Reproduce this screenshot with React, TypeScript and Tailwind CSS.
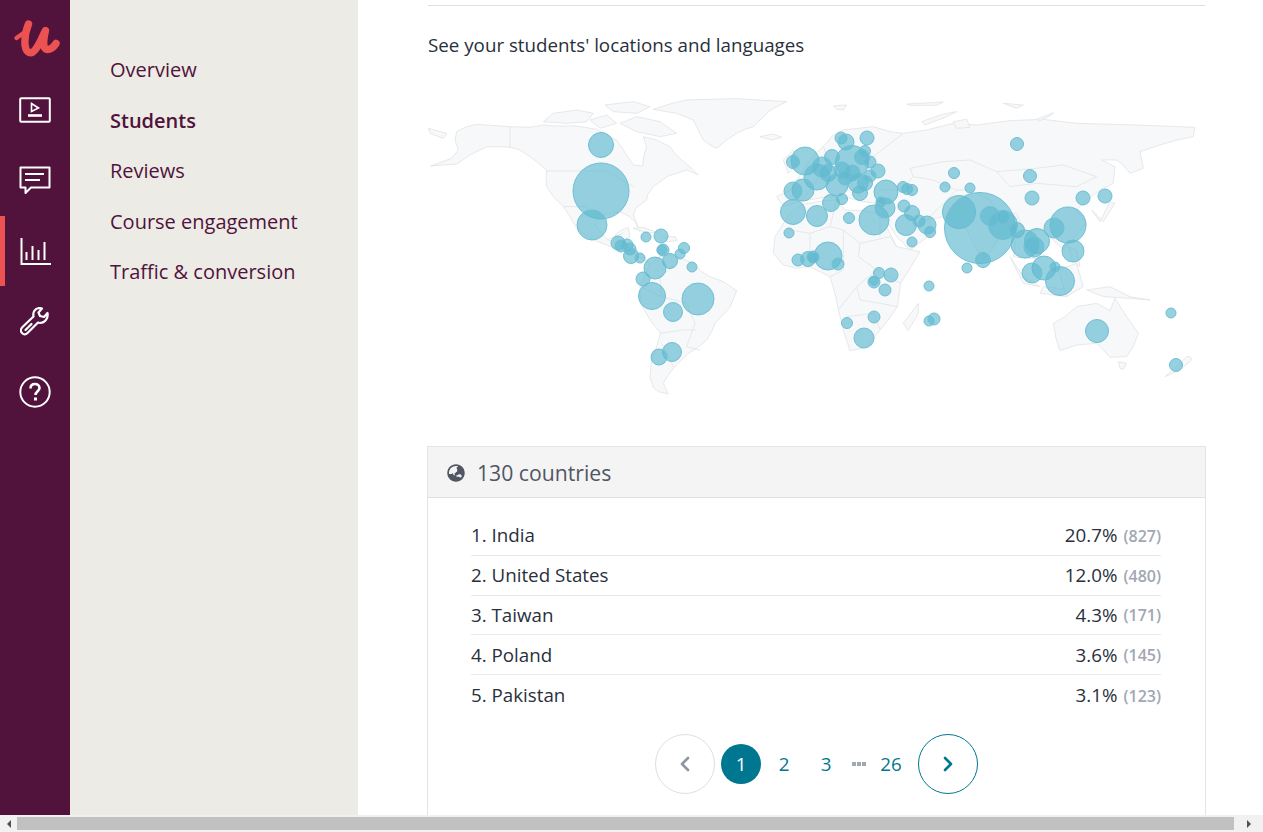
import { ChevronLeft, ChevronRight } from "lucide-react";
import { FaGlobeAsia } from "react-icons/fa";

const navItems = ["Overview", "Students", "Reviews", "Course engagement", "Traffic & conversion"];

const countries = [
  { name: "1. India", pct: "20.7%", count: "(827)" },
  { name: "2. United States", pct: "12.0%", count: "(480)" },
  { name: "3. Taiwan", pct: "4.3%", count: "(171)" },
  { name: "4. Poland", pct: "3.6%", count: "(145)" },
  { name: "5. Pakistan", pct: "3.1%", count: "(123)" },
];

// [x, y, r] in page coordinates
const bubbles = [
  [601, 191, 28], [601, 145, 12.5], [592, 225, 15], [618, 243, 7], [621, 246, 6], [627, 245, 6], [630, 249, 6],
  [631, 256, 7.5], [640, 258, 5], [646, 237, 5], [661, 236, 7], [663, 250, 6], [662, 250, 5], [684, 248, 5.5],
  [680, 254, 5], [670, 261, 7.5], [655, 268, 11], [643, 279, 7], [652, 296, 13.5], [673, 312, 9.5], [698, 299, 16],
  [692, 267, 5], [672, 352, 9.5], [659, 357, 8],
  [805, 161, 14], [793, 162, 6.5], [817, 177, 13], [803, 190, 11], [793, 191, 9], [793, 212, 12.5], [817, 216, 10.5],
  [789, 233, 5], [798, 260, 6], [808, 259, 7.5], [813, 258, 5],
  [841, 138, 6], [846, 142, 8], [867, 138, 7], [852, 162, 16.5], [865, 151, 5.5], [862, 157, 7.5], [870, 162, 6],
  [878, 171, 7], [832, 157, 7.5], [822, 167, 10], [828, 173, 8.5], [837, 185, 11], [842, 170, 8], [852, 173, 8],
  [845, 178, 7], [858, 183, 10], [865, 183, 7.5], [870, 176, 6], [860, 193, 7.5], [886, 192, 12], [903, 187, 5.5],
  [907, 189, 5.5], [912, 190, 5.5], [831, 203, 8.5], [842, 199, 5.5], [849, 218, 5.5], [874, 220, 15], [885, 208, 10],
  [881, 202, 5], [904, 206, 6], [912, 213, 7.5], [906, 225, 10.5], [919, 221, 6], [927, 225, 9], [930, 232, 5.5],
  [912, 242, 5], [959, 212, 16.5], [980, 228, 35.5], [990, 216, 9.5], [1003, 225, 14.5], [1003, 217, 6.5],
  [1017, 230, 7.5], [983, 260, 7.5], [967, 268, 5], [954, 173, 5.5], [945, 187, 5], [970, 188, 5], [1017, 144, 6.5],
  [1030, 176, 6.5], [1032, 198, 7], [1083, 198, 7], [1105, 196, 7], [1068, 225, 18], [1054, 228, 10],
  [1037, 241, 12.5], [1025, 244, 14], [1034, 247, 10], [1073, 251, 11], [1044, 268, 12], [1032, 273, 10],
  [1060, 281, 14.5], [1055, 267, 5], [828, 256, 14], [838, 264, 6], [813, 257, 6], [879, 273, 5.5], [891, 275, 7],
  [874, 282, 6], [874, 281, 4.5], [885, 290, 6], [929, 286, 5], [874, 317, 6], [847, 323, 5.5], [864, 338, 10],
  [929, 321, 5], [934, 319, 6], [1097, 331, 11.5], [1171, 313, 5], [1176, 365, 6.5],
];

// outlines below are traced at 3x, left half relative to (420,90), right half to (810,90)
const westLand = [
  "M110 125L140 110L170 103L270 110L330 112L370 105L400 108L470 108L530 118L560 135L590 150L620 195L640 225L668 228L672 195L680 170L670 140L710 150L750 170L765 190L790 215L815 235L835 255L800 240L770 250L745 258L720 275L700 290L682 315L680 330L650 352L640 375L660 425L645 395L625 378L600 365L570 370L545 380L525 405L545 430L565 450L590 457L585 435L605 420L625 412L630 440L610 460L650 480L690 522L720 500L750 490L785 505L820 520L845 545L870 560L910 575L950 602L930 652L885 700L875 725L860 750L830 775L805 790L785 810L765 830L745 855L730 880L745 912L715 905L700 892L690 860L695 810L710 770L722 730L690 690L662 640L660 590L690 522L640 490L600 480L560 465L520 450L490 430L470 415L450 380L430 350L400 320L380 290L378 262L380 240L350 215L330 200L300 180L270 172L235 170L200 170L150 195L110 222L70 225L32 228L60 218L95 205L115 180L105 150Z",
  "M700 58L750 42L800 30L950 26L1100 35L1060 55L1040 70L1020 90L1000 110L975 118L950 130L920 150L890 175L870 165L850 150L835 120L820 90L770 70Z",
  "M370 95L400 70L470 60L520 70L500 95L440 100Z",
  "M555 45L640 35L690 50L650 70L580 65Z",
  "M600 100L650 80L720 95L770 130L720 140L650 125Z",
  "M510 90L560 75L590 100L540 115Z",
  "M1020 140L1060 132L1085 142L1055 150Z",
  "M640 415L670 412L712 428L680 428Z",
  "M735 440L765 440L772 452L740 455Z",
  "M25 115L80 130L70 145L30 130Z",
];

const westBorders = [
  "M270 110L270 172", "M380 243L560 243L640 290", "M430 350L500 350L540 385", "M560 450L610 430",
  "M725 620L800 640L825 700L800 770", "M660 590L725 620L720 560L760 530", "M720 730L790 720L830 720",
  "M760 830L725 760", "M800 770L840 780",
];

const eastLand = [
  "M-60 300L-20 240L10 195L40 170L70 135L100 120L190 110L240 125L280 130L350 120L430 100L500 105L600 92L700 88L800 100L980 105L1155 112L1150 140L1100 150L1050 165L1020 175L990 185L1000 235L960 250L940 225L920 210L875 210L915 230L910 280L870 300L830 330L800 360L830 400L795 440L760 480L730 450L700 420L660 420L675 460L690 505L640 505L610 500L620 430L570 440L545 480L520 510L495 470L470 420L435 395L400 380L350 390L378 420L340 450L300 480L260 440L235 400L215 360L200 340L160 335L120 325L50 320L-30 335L-80 350L-100 320Z",
  "M-105 440L-60 370L-30 345L25 335L80 328L105 360L160 362L210 372L235 420L260 470L330 485L300 535L272 580L262 650L235 690L210 720L170 772L120 782L100 720L85 660L75 610L60 560L0 530L-40 535L-80 525L-110 490Z",
  "M325 640L325 670L295 722L280 700Z",
  "M730 700L765 680L800 650L860 640L900 662L915 625L950 680L985 730L970 770L950 800L900 802L880 780L860 760L800 765L750 782L738 745Z",
  "M925 815L950 820L940 838L930 835Z",
  "M1065 860L1100 830L1130 800L1140 800L1145 810L1110 840Z",
  "M870 395L900 335L915 340L880 395L845 360Z",
  "M600 500L640 560L690 590L640 580Z",
  "M700 590L790 600L770 620L690 610Z",
  "M745 540L800 520L820 590L770 620Z",
  "M830 600L900 590L960 620L1020 630L960 625L880 620Z",
  "M775 470L800 480L810 530L785 510Z",
  "M335 95L400 72L440 65L410 80L345 105Z",
  "M430 95L470 88L480 112L440 115Z",
  "M580 40L640 45L620 55Z",
  "M680 88L730 68L725 75L690 92Z",
  "M70 48L110 45L100 60L80 58Z",
  "M290 42L400 36L380 46L300 46Z",
  "M-80 210L-50 180L-35 220L-65 250Z",
];

const eastBorders = [
  "M300 235L400 215L480 210L560 245L680 235L760 225L860 260L800 290L680 280L600 290L560 245",
  "M310 260L370 270L440 300L480 300L540 330L560 370L620 370L640 420",
  "M300 235L310 260L270 300L215 300", "M440 300L400 340L350 390",
  "M60 410L100 420L150 460L240 440L260 470", "M150 460L145 500L200 540L272 580",
  "M100 420L100 540L60 560", "M0 430L60 410L80 328", "M-60 420L0 430L0 530", "M200 540L140 590L85 660",
  "M140 590L150 630L210 640L262 650", "M110 680L190 670L210 720", "M210 372L210 440",
  "M-30 335L30 260L100 245L150 320", "M100 245L190 200L280 130", "M40 170L70 240",
];

function WorldMap() {
  return (
    <svg viewBox="428 90 778 320" className="block w-[778px] h-[320px]">
      <g transform="translate(420 90) scale(0.3333)" fill="#f7f8fa" stroke="#e4e4e6" strokeWidth="2.6" strokeLinejoin="round">
        {westLand.map((d) => <path key={d} d={d} />)}
        {westBorders.map((d) => <path key={d} d={d} fill="none" />)}
      </g>
      <g transform="translate(810 90) scale(0.3333)" fill="#f7f8fa" stroke="#e4e4e6" strokeWidth="2.6" strokeLinejoin="round">
        {eastLand.map((d) => <path key={d} d={d} />)}
        {eastBorders.map((d) => <path key={d} d={d} fill="none" />)}
      </g>
      {bubbles.map(([x, y, r]) => (
        <circle key={`${x}-${y}-${r}`} cx={x} cy={y} r={r} fill="#5fb9d0" fillOpacity="0.66" stroke="#6fc0d4" strokeWidth="1" />
      ))}
    </svg>
  );
}

function Sidebar() {
  return (
    <div className="w-[70px] shrink-0 bg-[#51123b] text-white">
      <div className="h-[74px] flex items-start">
        <svg width="48" height="44" viewBox="0 0 48 44" className="ml-[13px] mt-[17px]" fill="none" stroke="#ec5252" strokeLinecap="round" strokeLinejoin="round">
          <path d="M15.5 7C13 13 11.5 20 12 28C13 36 18 38 22 33C27 27 29 20 32.5 13.5C31 20 30 27 31.5 30.5C33.5 34 39 33 43 26.5" strokeWidth="7.4" />
          <path d="M3.5 21L12 15" strokeWidth="4.4" />
        </svg>
      </div>
      <div className="h-[71px] flex items-center justify-center">
        <svg width="32" height="26" viewBox="0 0 32 26" fill="none" stroke="white">
          <rect x="1.2" y="1.2" width="29.6" height="23.6" rx="1" strokeWidth="2" />
          <path d="M12.5 6.5L19.5 11L12.5 14.5Z" strokeWidth="1.6" />
          <path d="M9 18.5H23" strokeWidth="2.6" />
        </svg>
      </div>
      <div className="h-[71px] flex items-center justify-center">
        <svg width="32" height="29" viewBox="0 0 32 29" fill="none" stroke="white" strokeWidth="2">
          <path d="M1.5 1.5H30.5V21.5H12L6.5 27V21.5H1.5Z" strokeLinejoin="round" />
          <path d="M6 8H25M6 14H21" />
        </svg>
      </div>
      <div className="h-[70px] flex items-center justify-center border-l-[5px] border-[#ec5252] pr-[5px]">
        <svg width="31" height="27" viewBox="0 0 31 27" fill="none" stroke="white" strokeWidth="2">
          <path d="M1.5 0V26H31" />
          <path d="M6.5 14V22M12.5 8V22M18.5 12V22M24.5 4V22" />
        </svg>
      </div>
      <div className="h-[71px] flex items-center justify-center">
        <svg width="30" height="30" viewBox="10 10 30 30" fill="none" stroke="white" strokeWidth="2.2" strokeLinejoin="round">
          <path d="M12.5 30L23.5 19.5C22.5 15 25 11 30 11L32 11.5L28.5 15.5L30 19L34 20L37.5 16C38.5 21 35 26 30 26L28 25.5L17.5 36C15.5 38 13 37.5 12 36C10.5 34.5 10.5 32 12.5 30Z" />
          <path d="M15.5 33L21.5 27" strokeLinecap="round" />
        </svg>
      </div>
      <div className="h-[70px] flex items-center justify-center">
        <svg width="32" height="32" viewBox="0 0 32 32" fill="none" stroke="white">
          <circle cx="16" cy="16" r="14.7" strokeWidth="2" />
          <path d="M11.5 12.5C11.5 9.5 13.5 8 16 8C18.7 8 20.5 9.7 20.5 12C20.5 15 16.5 15.5 16.5 19" strokeWidth="2.6" />
          <path d="M16.5 21.5V24.5" strokeWidth="3" />
        </svg>
      </div>
    </div>
  );
}

function ScrollBar() {
  return (
    <div className="h-[17px] shrink-0 bg-[#f1f1f1] flex items-center">
      <div className="w-[17px] flex justify-center">
        <div className="w-0 h-0 border-y-[4px] border-y-transparent border-r-[4px] border-r-[#505050]" />
      </div>
      <div className="flex-1 h-[13px] bg-[#c1c1c1]" />
      <div className="w-[29px] flex justify-center">
        <div className="w-0 h-0 border-y-[4px] border-y-transparent border-l-[4px] border-l-[#505050]" />
      </div>
    </div>
  );
}

export default function App() {
  return (
    <div className="h-[832px] w-[1263px] flex flex-col overflow-hidden bg-white font-['Open_Sans',sans-serif]">
      <div className="flex-1 flex min-h-0">
        <Sidebar />
        <div className="w-[288px] shrink-0 bg-[#ecebe6] pt-[45px] pl-[40px] text-[#51123b]">
          {navItems.map((item) => (
            <div key={item} className={`h-[50.5px] flex items-center text-[20px] ${item === "Students" ? "font-semibold" : ""}`}>
              {item}
            </div>
          ))}
        </div>
        <div className="flex-1 min-w-0 pl-[69px] pr-[57px] pt-[5px]">
          <div className="border-t border-[#dedfe0] ml-[1px] mr-[1px]" />
          <p className="mt-[25px] ml-[1px] text-[18.75px] leading-[28px] text-[#29303b]">See your students' locations and languages</p>
          <div className="mt-[31px] ml-[1px]">
            <WorldMap />
          </div>
          <div className="mt-[36px] border border-[#e4e4e4] h-[400px]">
            <div className="h-[51px] pt-[2px] bg-[#f4f4f4] border-b border-[#e0e0e0] flex items-center pl-[19px] gap-[12px] text-[#505763]">
              <FaGlobeAsia size={18} />
              <span className="text-[21.2px]">130 countries</span>
            </div>
            <div className="pt-[18px] pl-[43px] pr-[44px]">
              {countries.map((c, i) => (
                <div key={c.name} className={`h-[39.8px] flex items-center justify-between ${i < 4 ? "border-b border-[#e8e9eb]" : ""}`}>
                  <span className="text-[18.75px] text-[#29303b]">{c.name}</span>
                  <span className="flex items-center gap-[6px]">
                    <span className="text-[18.75px] text-[#29303b]">{c.pct}</span>
                    <span className="text-[16px] font-semibold text-[#a1a7b3] mt-[1px]">{c.count}</span>
                  </span>
                </div>
              ))}
            </div>
            <div className="mt-[19px] flex items-center justify-center text-[18.75px] text-[#007791]">
              <div className="w-[60px] h-[60px] rounded-full border border-[#dedfe0] flex items-center justify-center text-[#8f96a3]">
                <ChevronLeft size={24} strokeWidth={2.6} />
              </div>
              <div className="ml-[6px] w-[40px] h-[40px] rounded-full bg-[#007791] text-white flex items-center justify-center">1</div>
              <div className="w-[46px] text-center">2</div>
              <div className="w-[38px] text-center">3</div>
              <div className="w-[27px] flex gap-[1px] justify-center">
                <div className="w-[4px] h-[4px] bg-[#a1a7b3]" />
                <div className="w-[4px] h-[4px] bg-[#a1a7b3]" />
                <div className="w-[4px] h-[4px] bg-[#a1a7b3]" />
              </div>
              <div className="w-[38px] text-center">26</div>
              <div className="ml-[8px] w-[60px] h-[60px] rounded-full border border-[#007791] flex items-center justify-center">
                <ChevronRight size={24} strokeWidth={2.6} />
              </div>
            </div>
          </div>
        </div>
      </div>
      <ScrollBar />
    </div>
  );
}
